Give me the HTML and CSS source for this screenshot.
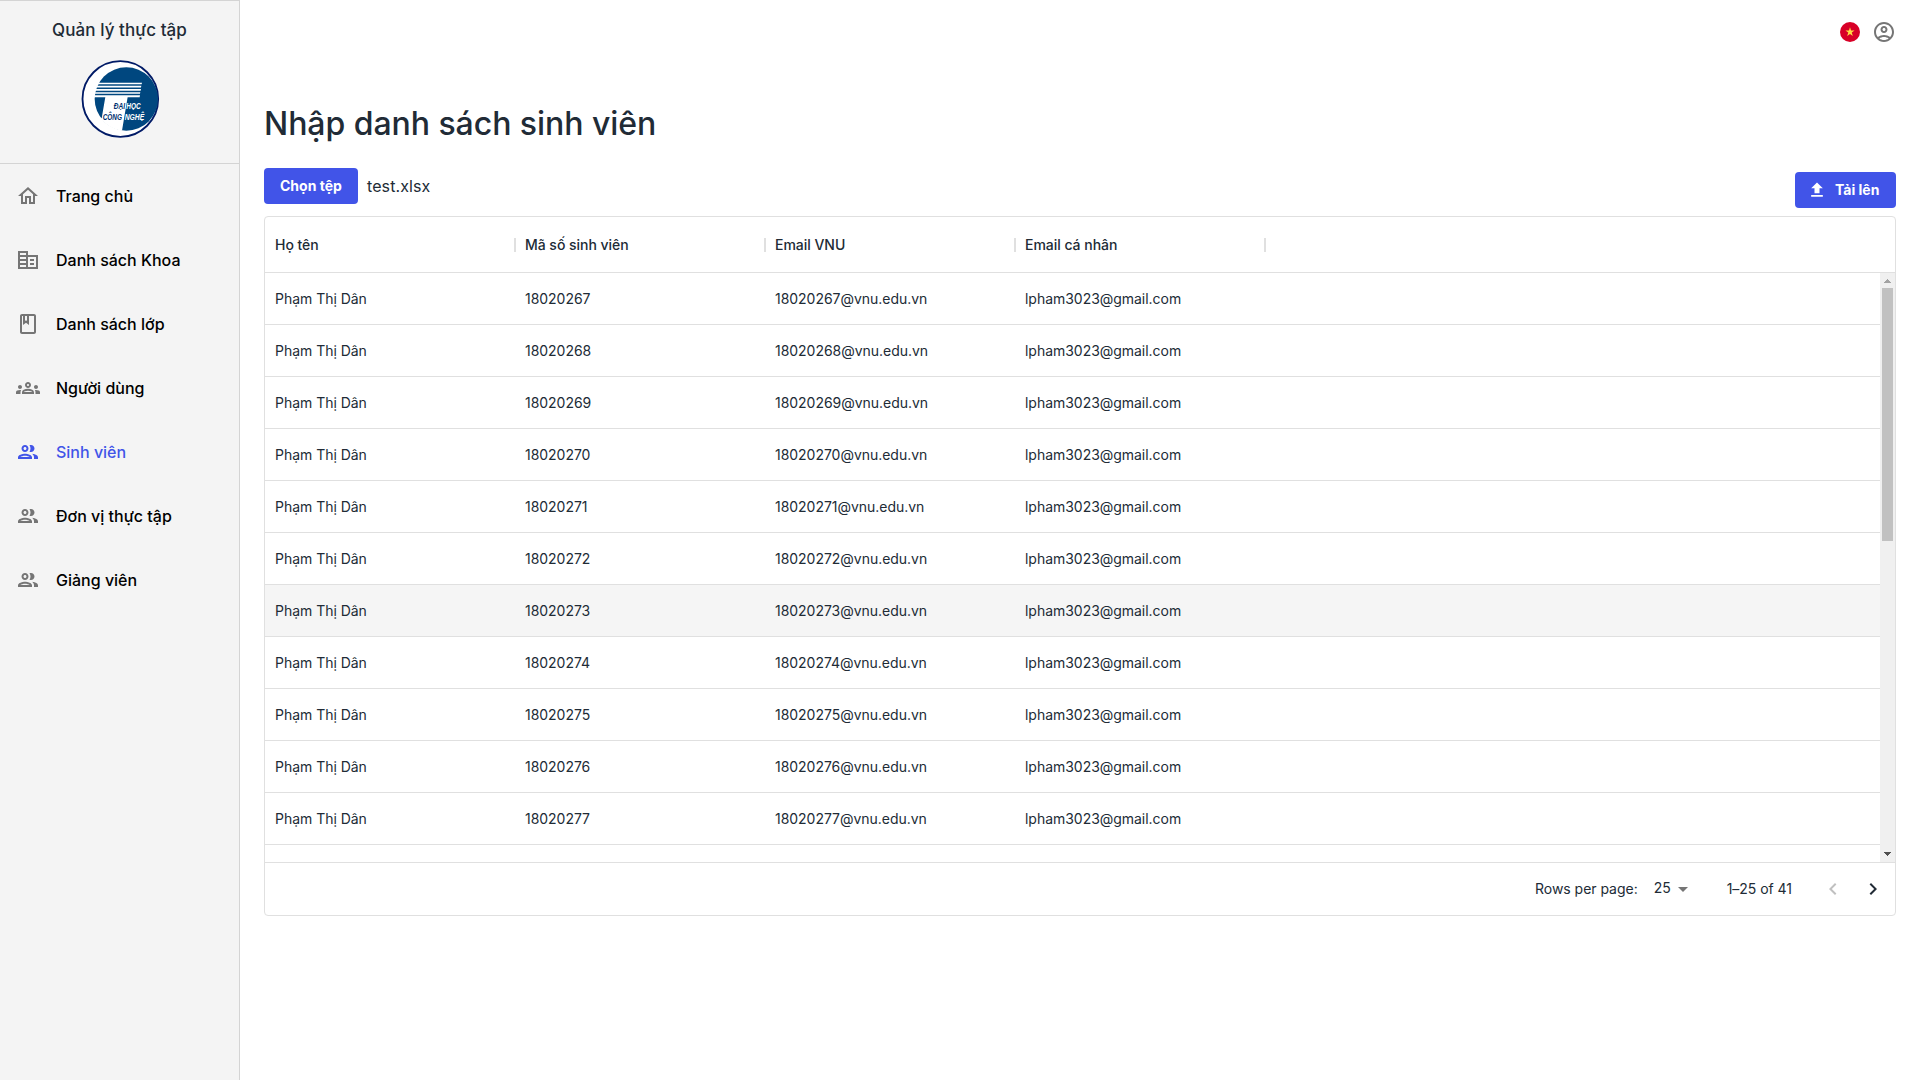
FILE: index.html
```html
<!DOCTYPE html>
<html lang="vi">
<head>
<meta charset="utf-8">
<title>Quản lý thực tập</title>
<link rel="stylesheet" href="styles.css">
</head>
<body>
<div class="app">
  <aside class="sidebar">
    <div class="brand">
      <span class="brand-name">Quản lý thực tập</span>
      <svg class="logo" viewBox="30 27 240 240" role="img" aria-label="Đại học Công nghệ">
        <defs>
          <clipPath id="disc"><circle cx="169" cy="147" r="97"/></clipPath>
        </defs>
        <circle cx="151" cy="147" r="113.500" fill="#fff" stroke="#001a66" stroke-width="5.500"/>
        <circle cx="169" cy="147" r="95" fill="#00477f"/>
        <g fill="#fff" clip-path="url(#disc)">
          <path d="M60 98H216L215 103H60zM60 107.500H214L213 112.500H60zM60 117H213L212 122H60zM60 126.500H211L210 131.500H60zM60 136H210L209 142H60z"/>
          <path d="M106 141H173L155 248H60V205H95z"/>
        </g>
        <g class="logo-text">
          <text x="131" y="176" textLength="34" lengthAdjust="spacingAndGlyphs" fill="#00306e">ĐẠI</text>
          <text x="169" y="176" textLength="43" lengthAdjust="spacingAndGlyphs" fill="#fff">HỌC</text>
          <text x="98" y="210" textLength="58" lengthAdjust="spacingAndGlyphs" fill="#00306e">CÔNG</text>
          <text x="164" y="210" textLength="59" lengthAdjust="spacingAndGlyphs" fill="#fff">NGHỆ</text>
        </g>
      </svg>
    </div>
    <nav class="nav">
      <a class="nav-item"><svg class="icon" viewBox="0 0 24 24"><path d="M12 5.690l5 4.500V18h-2v-6H9v6H7v-7.810l5-4.500M12 3 2 12h3v8h6v-6h2v6h6v-8h3L12 3z"/></svg><span>Trang chủ</span></a>
      <a class="nav-item"><svg class="icon" viewBox="0 0 24 24"><path d="M12 7V3H2v18h20V7H12zm-2 12H4v-2h6v2zm0-4H4v-2h6v2zm0-4H4V9h6v2zm0-4H4V5h6v2zm10 12h-8V9h8v10zm-2-8h-4v2h4v-2zm0 4h-4v2h4v-2z"/></svg><span>Danh sách Khoa</span></a>
      <a class="nav-item"><svg class="icon" viewBox="0 0 24 24"><path d="M18 2H6c-1.100 0-2 .9-2 2v16c0 1.100.9 2 2 2h12c1.100 0 2-.9 2-2V4c0-1.100-.9-2-2-2zM9 4h2v5l-1-.75L9 9V4zm9 16H6V4h1v9l3-2.250L13 13V4h5v16z"/></svg><span>Danh sách lớp</span></a>
      <a class="nav-item"><svg class="icon" viewBox="0 0 24 24"><path d="M4 13c1.100 0 2-.9 2-2s-.9-2-2-2-2 .9-2 2 .9 2 2 2zm1.130 1.100c-.37-.06-.74-.1-1.130-.1-.99 0-1.930.21-2.780.58C.48 14.900 0 15.620 0 16.430V18h4.500v-1.610c0-.83.23-1.610.63-2.290zM20 13c1.100 0 2-.9 2-2s-.9-2-2-2-2 .9-2 2 .9 2 2 2zm4 3.430c0-.81-.48-1.530-1.220-1.850-.85-.37-1.790-.58-2.780-.58-.39 0-.76.04-1.130.1.4.68.63 1.460.63 2.290V18H24v-1.570zm-7.760-2.780c-1.170-.52-2.610-.9-4.240-.9-1.630 0-3.070.39-4.240.9C6.680 14.130 6 15.210 6 16.390V18h12v-1.610c0-1.180-.68-2.260-1.760-2.740zM8.070 16c.09-.23.13-.39.91-.69.97-.38 1.990-.56 3.020-.56s2.050.18 3.020.56c.77.3.81.46.91.69H8.070zM12 8c.55 0 1 .45 1 1s-.45 1-1 1-1-.45-1-1 .45-1 1-1m0-2c-1.660 0-3 1.340-3 3s1.340 3 3 3 3-1.340 3-3-1.340-3-3-3z"/></svg><span>Người dùng</span></a>
      <a class="nav-item active"><svg class="icon" viewBox="0 0 24 24"><path id="people" d="M9 13.750c-2.340 0-7 1.170-7 3.500V19h14v-1.750c0-2.330-4.660-3.500-7-3.500zM4.340 17c.84-.58 2.870-1.250 4.660-1.250s3.820.67 4.660 1.250H4.340zM9 12c1.930 0 3.500-1.570 3.500-3.500S10.930 5 9 5 5.500 6.570 5.500 8.500 7.070 12 9 12zm0-5c.83 0 1.500.67 1.500 1.500S9.830 10 9 10s-1.500-.67-1.500-1.500S8.170 7 9 7zm7.040 6.810c1.160.84 1.960 1.960 1.960 3.440V19h4v-1.750c0-2.020-3.500-3.170-5.960-3.440zM15 12c1.930 0 3.500-1.570 3.500-3.500S16.930 5 15 5c-.54 0-1.040.13-1.500.35.63.89 1 1.980 1 3.150s-.37 2.260-1 3.150c.46.22.96.35 1.500.35z"/></svg><span>Sinh viên</span></a>
      <a class="nav-item"><svg class="icon" viewBox="0 0 24 24"><use href="#people"/></svg><span>Đơn vị thực tập</span></a>
      <a class="nav-item"><svg class="icon" viewBox="0 0 24 24"><use href="#people"/></svg><span>Giảng viên</span></a>
    </nav>
  </aside>

  <main class="main">
    <header class="topbar">
      <svg class="flag" viewBox="0 0 512 512"><circle cx="256" cy="256" r="256" fill="#d80027"/><path fill="#ffda44" d="M256 133.600l27.700 85.200h89.500l-72.400 52.600 27.600 85.200L256 304l-72.400 52.600 27.700-85.200-72.500-52.600h89.600z"/></svg>
      <svg class="icon" viewBox="0 0 24 24"><path d="M12 2C6.480 2 2 6.480 2 12s4.480 10 10 10 10-4.480 10-10S17.520 2 12 2zM7.350 18.500C8.660 17.560 10.260 17 12 17s3.340.56 4.650 1.500C15.340 19.440 13.740 20 12 20s-3.340-.56-4.650-1.500zm10.790-1.380C16.450 15.800 14.320 15 12 15s-4.450.8-6.140 2.120C4.700 15.730 4 13.950 4 12c0-4.420 3.580-8 8-8s8 3.580 8 8c0 1.950-.7 3.730-1.860 5.120zM12 6c-1.930 0-3.500 1.570-3.500 3.500S10.070 13 12 13s3.500-1.570 3.500-3.500S13.930 6 12 6zm0 5c-.83 0-1.500-.67-1.500-1.500S11.170 8 12 8s1.500.67 1.500 1.500S12.830 11 12 11z"/></svg>
    </header>
    <h1 class="title">Nhập danh sách sinh viên</h1>
    <div class="toolbar">
      <div class="picker">
        <button class="btn btn-pick"><span>Chọn tệp</span></button>
        <span class="file-name">test.xlsx</span>
      </div>
      <button class="btn btn-upload"><svg viewBox="0 0 24 24"><path d="M5 20h14v-2H5v2zm0-10h4v6h6v-6h4l-7-7-7 7z"/></svg><span>Tải lên</span></button>
    </div>

    <section class="grid">
      <div class="grid-head">
        <div class="cell">Họ tên</div><div class="cell">Mã số sinh viên</div><div class="cell">Email VNU</div><div class="cell">Email cá nhân</div>
      </div>
      <div class="grid-body">
        <div class="rows">
          <div class="row"><div class="cell">Phạm Thị Dân</div><div class="cell">18020267</div><div class="cell">18020267@vnu.edu.vn</div><div class="cell">lpham3023@gmail.com</div></div>
          <div class="row"><div class="cell">Phạm Thị Dân</div><div class="cell">18020268</div><div class="cell">18020268@vnu.edu.vn</div><div class="cell">lpham3023@gmail.com</div></div>
          <div class="row"><div class="cell">Phạm Thị Dân</div><div class="cell">18020269</div><div class="cell">18020269@vnu.edu.vn</div><div class="cell">lpham3023@gmail.com</div></div>
          <div class="row"><div class="cell">Phạm Thị Dân</div><div class="cell">18020270</div><div class="cell">18020270@vnu.edu.vn</div><div class="cell">lpham3023@gmail.com</div></div>
          <div class="row"><div class="cell">Phạm Thị Dân</div><div class="cell">18020271</div><div class="cell">18020271@vnu.edu.vn</div><div class="cell">lpham3023@gmail.com</div></div>
          <div class="row"><div class="cell">Phạm Thị Dân</div><div class="cell">18020272</div><div class="cell">18020272@vnu.edu.vn</div><div class="cell">lpham3023@gmail.com</div></div>
          <div class="row hovered"><div class="cell">Phạm Thị Dân</div><div class="cell">18020273</div><div class="cell">18020273@vnu.edu.vn</div><div class="cell">lpham3023@gmail.com</div></div>
          <div class="row"><div class="cell">Phạm Thị Dân</div><div class="cell">18020274</div><div class="cell">18020274@vnu.edu.vn</div><div class="cell">lpham3023@gmail.com</div></div>
          <div class="row"><div class="cell">Phạm Thị Dân</div><div class="cell">18020275</div><div class="cell">18020275@vnu.edu.vn</div><div class="cell">lpham3023@gmail.com</div></div>
          <div class="row"><div class="cell">Phạm Thị Dân</div><div class="cell">18020276</div><div class="cell">18020276@vnu.edu.vn</div><div class="cell">lpham3023@gmail.com</div></div>
          <div class="row"><div class="cell">Phạm Thị Dân</div><div class="cell">18020277</div><div class="cell">18020277@vnu.edu.vn</div><div class="cell">lpham3023@gmail.com</div></div>
        </div>
        <div class="scrollbar">
          <svg class="arrow" viewBox="0 0 15 15" shape-rendering="crispEdges"><path fill="#a3a3a3" d="M7 6h1v1h1v1h1v1h1v1H4V9h1V8h1V7h1z"/></svg>
          <div class="thumb"></div>
          <svg class="arrow" viewBox="0 0 15 15" shape-rendering="crispEdges"><path fill="#505050" d="M4 5h7v1h-1v1H9v1H8v1H7V8H6V7H5V6H4z"/></svg>
        </div>
      </div>
      <footer class="grid-foot">
        <span class="foot-label">Rows per page:</span>
        <div class="select"><span>25</span><svg class="icon" viewBox="0 0 24 24"><path d="M7 10l5 5 5-5z"/></svg></div>
        <span class="range">1–25 of 41</span>
        <button class="page-btn disabled"><svg class="icon" viewBox="0 0 24 24"><path d="M15.410 7.410L14 6l-6 6 6 6 1.410-1.410L10.830 12z"/></svg></button>
        <button class="page-btn"><svg class="icon" viewBox="0 0 24 24"><path d="M10 6L8.590 7.410 13.170 12l-4.580 4.590L10 18l6-6z"/></svg></button>
      </footer>
    </section>
  </main>
</div>
</body>
</html>
```
FILE: styles.css
```css
* { box-sizing: border-box; }
body {
  margin: 0;
  font-family: Inter, "Liberation Sans", sans-serif;
  color: #212b36;
  background: #fff;
}
button { font: inherit; border: 0; margin: 0; cursor: pointer; }
.app { display: flex; height: 1080px; overflow: hidden; }
.icon { width: 24px; height: 24px; fill: #757575; flex: none; display: block; }

.sidebar {
  width: 240px;
  flex: none;
  background: #f4f4f4;
  border-top: 1px solid #d4d4d4;
  border-right: 1px solid #d4d4d4;
}
.brand {
  height: 163px;
  border-bottom: 1px solid #d4d4d4;
  display: flex;
  flex-direction: column;
  align-items: center;
  padding-top: 16px;
}
.brand-name { font-size: 17px; line-height: 26px; font-weight: 450; letter-spacing: 0.08px; }
.logo { width: 80px; height: 80px; margin-top: 16px; display: block; }
.logo-text { font: italic bold 25px "Liberation Sans", sans-serif; }
.nav-item {
  display: flex;
  align-items: center;
  gap: 16px;
  height: 64px;
  padding-left: 16px;
  font-size: 16px;
  font-weight: 500;
  color: #000;
}
.active { color: #4154e8; }
.active .icon { fill: #4154e8; }

.main { flex: 1; padding: 0 24px; }
.topbar { height: 64px; display: flex; justify-content: flex-end; align-items: center; gap: 12px; }
.flag { width: 20px; height: 20px; }
.title { margin: 36px 0 0; font-size: 32px; line-height: 48px; font-weight: 500; letter-spacing: -0.05px; }
.toolbar { display: flex; justify-content: space-between; align-items: flex-end; height: 40px; margin: 20px 0 8px; }
.picker { display: flex; align-items: center; gap: 9px; align-self: flex-start; }
.btn {
  height: 36px;
  padding: 0 16px;
  border-radius: 4px;
  background: #4154e8;
  color: #fff;
  font-size: 14px;
  font-weight: 700;
  display: flex;
  align-items: center;
  white-space: nowrap;
}
.btn span { padding-bottom: 2px; }
.btn-pick { width: 94px; }
.btn-upload { width: 101px; padding-left: 12px; gap: 8px; }
.btn-upload svg { width: 20px; height: 20px; fill: #fff; }
.file-name { font-size: 16px; line-height: 24px; letter-spacing: 0.1px; }

.grid { height: 700px; border: 1px solid #e0e0e0; border-radius: 4px; display: flex; flex-direction: column; font-size: 14px; letter-spacing: -0.03px; }
.grid-head { display: flex; height: 56px; border-bottom: 1px solid #e0e0e0; font-weight: 500; }
.cell { width: 250px; padding: 0 10px; display: flex; align-items: center; white-space: nowrap; }
.grid-head .cell { justify-content: space-between; padding-right: 0; }
.grid-head .cell::after { content: ""; width: 2px; height: 14px; background: #e0e0e0; margin-right: -1px; }
.grid-body { flex: 1; display: flex; min-height: 0; }
.rows { flex: 1; overflow: hidden; }
.row { display: flex; height: 52px; border-bottom: 1px solid #e0e0e0; }
.hovered { background: #f5f5f5; }
.scrollbar { width: 15px; background: #f0f0f0; display: flex; flex-direction: column; align-items: center; }
.arrow { width: 15px; height: 15px; flex: none; }
.thumb { width: 11px; height: 253px; background: #c1c1c1; margin-bottom: auto; }
.grid-foot {
  height: 53px;
  border-top: 1px solid #e0e0e0;
  display: flex;
  align-items: center;
  justify-content: flex-end;
  padding-right: 2px;
}
.foot-label, .range { padding-bottom: 2px; }
.select { display: flex; align-items: center; margin: 0 32px 0 16px; }
.select span { padding-bottom: 3px; }
.range { margin-right: 21px; }
.page-btn { width: 40px; height: 40px; padding: 8px; background: none; }
.page-btn .icon { fill: #212b36; }
.disabled .icon { fill: #c0c0c0; }
```
